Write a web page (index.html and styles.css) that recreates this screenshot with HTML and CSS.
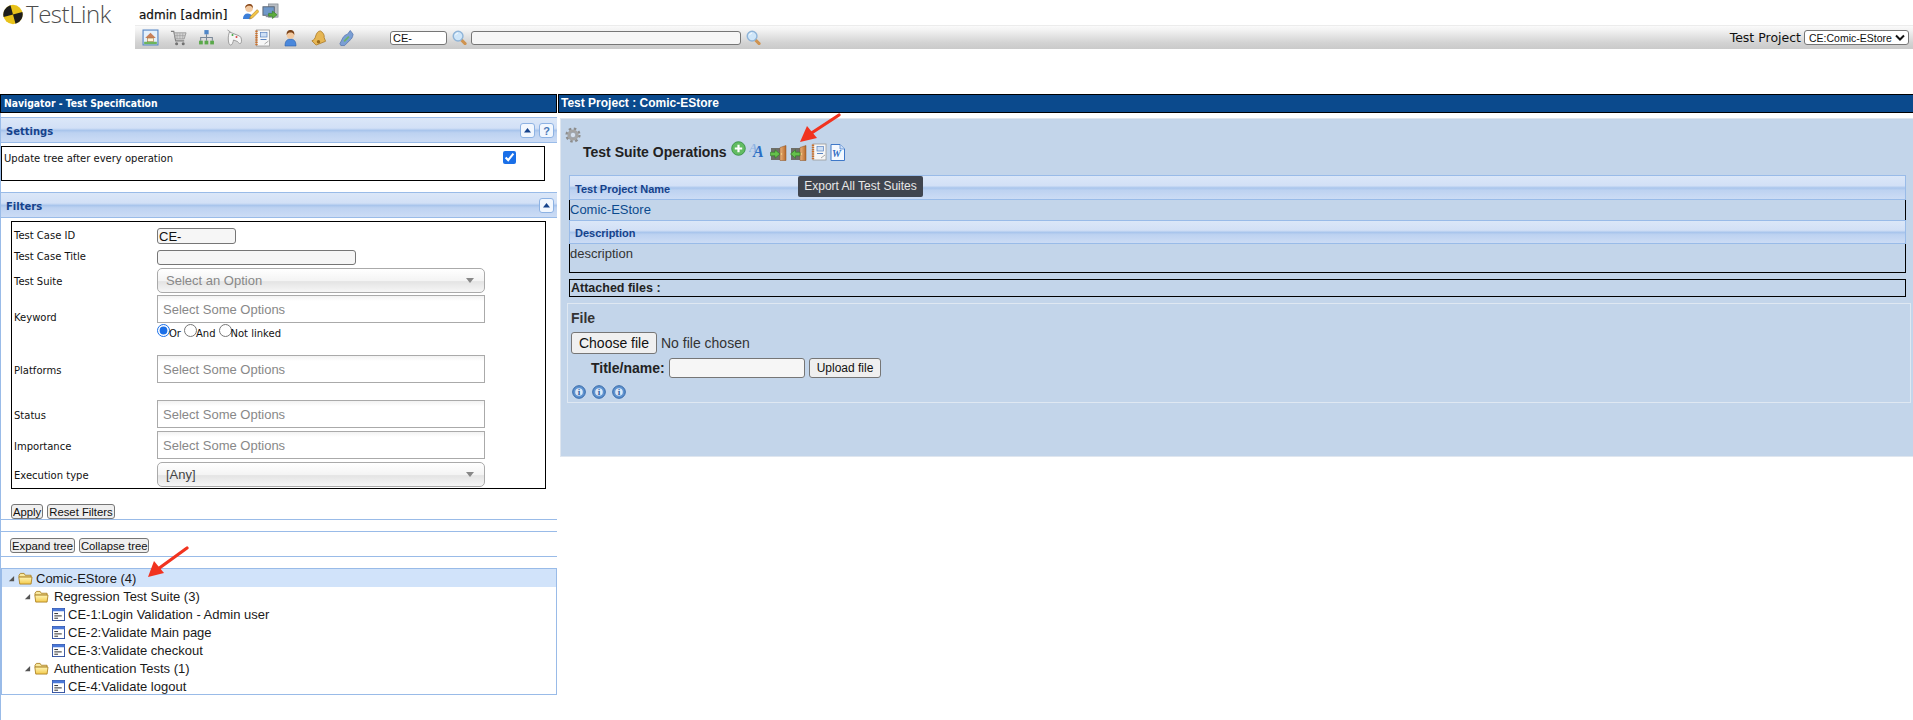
FILE: index.html
```html
<!DOCTYPE html>
<html lang="en">
<head>
<meta charset="utf-8">
<title>TestLink</title>
<link rel="stylesheet" href="styles.css">
</head>
<body>
<svg class="sprite" aria-hidden="true">
  <defs>
    <linearGradient id="gfolder" x1="0" y1="0" x2="0" y2="1"><stop offset="0" stop-color="#fff6b8"/><stop offset="1" stop-color="#f3c94a"/></linearGradient>
    <linearGradient id="gdoor" x1="0" y1="0" x2="1" y2="0"><stop offset="0" stop-color="#eab27c"/><stop offset="1" stop-color="#b86a2a"/></linearGradient>
    <symbol id="i-folder" viewBox="0 0 16 14"><path d="M1 3.500 2.500 1.500h4l1.200 2H14v2H1z" fill="#f8e9a0" stroke="#a87c1c" stroke-width=".9"/><path d="M.8 5.500h14.200L14 13H1.800z" fill="url(#gfolder)" stroke="#a87c1c" stroke-width=".9"/></symbol>
    <symbol id="i-case" viewBox="0 0 14 14"><rect x=".5" y=".5" width="13" height="13" fill="#fff" stroke="#2f4e9e"/><rect x=".5" y=".5" width="13" height="3" fill="#4a78d8"/><path d="M2.500 6h4M2.500 8.500h8M2.500 11h4" stroke="#222" stroke-width="1"/></symbol>
    <symbol id="i-tri" viewBox="0 0 8 8"><path d="M7 1v6H1z" fill="#555"/></symbol>
    <symbol id="i-mag" viewBox="0 0 16 16"><path d="M10 10.500 14 14.500" stroke="#cf9350" stroke-width="3.200" stroke-linecap="round"/><circle cx="6.500" cy="6.500" r="5.200" fill="#cfe6f9" stroke="#8fb4d8" stroke-width="1.500"/><path d="M3.800 5.500c.4-1.200 1.300-2 2.600-2.200" fill="none" stroke="#fff" stroke-width="1"/></symbol>
    <symbol id="i-home" viewBox="0 0 16 16"><rect x="1" y="1" width="14" height="14" fill="#e4f0fb" stroke="#5a8ac8" stroke-width="1.100"/><path d="M3 8.500 8 3.500 13 8.500z" fill="#c9805a"/><rect x="5" y="8.500" width="6" height="3.500" fill="#fff3d8" stroke="#9a6a30" stroke-width=".5"/><rect x="2" y="12" width="12" height="2.300" fill="#6cb45c"/></symbol>
    <symbol id="i-cart" viewBox="0 0 18 18"><path d="M1 2h3l2 10h9" fill="none" stroke="#808080" stroke-width="1.200"/><path d="M4.500 3.500H17l-2 6.500H5.800z" fill="#d2d2d2" stroke="#8f8f8f" stroke-width=".8"/><path d="M7.500 4v6M10.500 4v6M13.500 4v6M5 6.500h11" stroke="#989898" stroke-width=".6"/><circle cx="7" cy="15" r="1.600" fill="#707070"/><circle cx="14" cy="15" r="1.600" fill="#707070"/></symbol>
    <symbol id="i-tree" viewBox="0 0 16 16"><rect x="6" y="1" width="4" height="4" fill="#4f86c8"/><path d="M8 5v3M2.500 11V8h11v3M8 8v3" fill="none" stroke="#7a8898"/><rect x="1" y="11" width="3.500" height="3.500" fill="#5aa84a"/><rect x="6.200" y="11" width="3.500" height="3.500" fill="#5aa84a"/><rect x="11.500" y="11" width="3.500" height="3.500" fill="#5aa84a"/></symbol>
    <symbol id="i-pad" viewBox="0 0 16 18"><path d="M3 3 13 7c2 1 2.500 5 1.500 7-1 1.500-2.500 0-3.500-1.500L7 11c-.5 2-1 5-3 5-2.500 0-3-9-1-13z" fill="#f6f6f6" stroke="#8a8a8a" stroke-width=".8"/><circle cx="10" cy="8" r="1" fill="#d44"/><circle cx="6" cy="6" r="1" fill="#4a4"/><path d="M1 1 4 3" stroke="#8a8a8a" stroke-width=".8"/></symbol>
    <symbol id="i-note" viewBox="0 0 16 18"><rect x="2" y="1" width="13" height="16" fill="#f7f7f7" stroke="#9a9a9a" stroke-width=".8"/><path d="M2 1.500v15" stroke="#c9702c" stroke-width="2.400" stroke-dasharray="1.500 .7"/><rect x="6" y="3.500" width="6.500" height="4.500" fill="#cfe0f5" stroke="#5a84c0" stroke-width=".7"/><path d="M6 10.500h6" stroke="#5a84c0"/><path d="m10 15 4-3" stroke="#aaa"/></symbol>
    <symbol id="i-user" viewBox="0 0 16 18"><path d="M2.500 17c0-5 2-7 5.500-7s5.500 2 5.500 7z" fill="#4a88dc" stroke="#2c5ea8" stroke-width=".6"/><circle cx="8" cy="6" r="3.800" fill="#f2c9a0"/><path d="M4.200 6c-.5-4 2-5 3.800-5s4.300 1 3.800 5c-1-2-2-2.500-3.800-2.500S5.200 4 4.200 6z" fill="#7a4218"/></symbol>
    <symbol id="i-bell" viewBox="0 0 18 18"><path d="M11 1.500c3 1.500 4.500 4.500 4 7l1.500 4-10 4-4.500-4.500c2-.5 3.500-2.500 4-5 .8-3 2.500-5.500 5-5.500z" fill="#e6b654" stroke="#a8741c" stroke-width=".8"/><circle cx="9" cy="13" r="1.800" fill="#9a6a18"/></symbol>
    <symbol id="i-plug" viewBox="0 0 18 18"><path d="M13 1 16 5c-.5 4-2 5-3 6L7 17H3l-1-2 3-6c1-2 3-3.500 5-4z" fill="#7a9ed4" stroke="#4a6ea8" stroke-width=".7"/><path d="m6.500 12.500 5-5" stroke="#6cb468" stroke-width="1.800"/></symbol>
    <symbol id="i-editor" viewBox="0 0 18 18"><path d="M1 17c0-4 2-6 5-6 2 0 4 1 5 3l-2 3z" fill="#3d7fd8"/><circle cx="7.500" cy="5.500" r="4" fill="#f2c9a0"/><path d="M3.500 5.500C3 2 6 1 8 1s4 1.500 3.500 4.500C10.500 3.500 9 3 7.500 3s-3 .5-4 2.500z" fill="#8a4a1c"/><path d="M8 17l1-3 7-7 2 2-7 7z" fill="#f3c545" stroke="#a8741c" stroke-width=".6"/></symbol>
    <symbol id="i-monitor" viewBox="0 0 18 18"><rect x="7" y="1" width="10" height="14" fill="#b9bec4" stroke="#7b828a" stroke-width=".7"/><rect x="1" y="4" width="12" height="9" fill="#6f98c9" stroke="#5a6470"/><rect x="4" y="13" width="6" height="2" fill="#8b929a"/><path d="M7 11h4V8.500l5 4-5 4V14H7z" fill="#5cad3c" stroke="#2f7a20" stroke-width=".6"/></symbol>
    <symbol id="i-up" viewBox="0 0 15 15"><rect x=".5" y=".5" width="14" height="14" rx="2.500" fill="#f2f7fe" stroke="#8db2e3"/><path d="M7.500 5 11 9.500H4z" fill="#15428b"/></symbol>
    <symbol id="i-help" viewBox="0 0 15 15"><rect x=".5" y=".5" width="14" height="14" rx="2.500" fill="#f2f7fe" stroke="#8db2e3"/><text x="7.500" y="11.500" text-anchor="middle" class="glyph-help">?</text></symbol>
    <symbol id="i-gear" viewBox="0 0 16 16"><circle cx="8" cy="8" r="6.400" fill="none" stroke="#8d8d8d" stroke-width="2.400" stroke-dasharray="2.500 2.530"/><circle cx="8" cy="8" r="4.300" fill="none" stroke="#a4a4a4" stroke-width="2.600"/><circle cx="8" cy="8" r="2.800" fill="#d5e0ee" stroke="#7d7d7d" stroke-width=".6"/></symbol>
    <symbol id="i-plus" viewBox="0 0 15 15"><circle cx="7.500" cy="7.500" r="6.800" fill="#62bc62" stroke="#2f8a3a" stroke-width=".8"/><path d="M7.500 3.800v7.400M3.800 7.500h7.400" stroke="#fff" stroke-width="2.200"/></symbol>
    <symbol id="i-door-out" viewBox="0 0 17 16"><rect x="1" y="3" width="9" height="12" fill="#6e6e68"/><path d="M10 2.500 16 .5V15.500H10z" fill="url(#gdoor)" stroke="#8b5020" stroke-width=".5"/><circle cx="11.500" cy="9" r=".7" fill="#ffe08a"/><path d="M.5 7.200H5V4.800L10 9l-5 4.200V10.800H.5z" fill="#64c04a" stroke="#2c7a22" stroke-width=".6"/></symbol>
    <symbol id="i-door-in" viewBox="0 0 17 16"><rect x="1" y="3" width="9" height="12" fill="#6e6e68"/><path d="M10 2.500 16 .5V15.500H10z" fill="url(#gdoor)" stroke="#8b5020" stroke-width=".5"/><circle cx="11.500" cy="9" r=".7" fill="#ffe08a"/><path d="M10 7.200H5.500V4.800L.5 9l5 4.200V10.800H10z" fill="#64c04a" stroke="#2c7a22" stroke-width=".6"/></symbol>
    <symbol id="i-word" viewBox="0 0 15 17"><path d="M1 .5h9l4.500 4.500v11.500H1z" fill="#f5f9ff" stroke="#3f78c8"/><path d="M10 .5V5h4.500" fill="#cfe0f8" stroke="#3f78c8" stroke-width=".7"/><text x="6.500" y="13" text-anchor="middle" class="glyph-word">W</text></symbol>
    <symbol id="i-info" viewBox="0 0 14 14"><circle cx="7" cy="7" r="6.300" fill="#5f93cf" stroke="#3467a8"/><circle cx="7" cy="7" r="3.800" fill="#dbe8f8"/><text x="7" y="10.300" text-anchor="middle" class="glyph-info">i</text></symbol>
  </defs>
</svg>

<header class="top">
  <div class="brand">
    <svg class="logo-mark" viewBox="0 0 20 21"><circle cx="10" cy="10.500" r="9.700" fill="#e8c21a"/><path d="M10 10.500 .63 13.010A9.700 9.700 0 0 1 7.490 1.130zM10 10.500 19.370 7.990A9.700 9.700 0 0 1 12.510 19.870z" fill="#1d1d1d"/></svg>
    <span class="logo-text">TestLink</span>
  </div>
  <div class="top-main">
    <div class="userline">
      <span class="username">admin [admin]</span>
      <svg class="ic-16 user-ic"><use href="#i-editor"/></svg>
      <svg class="ic-16"><use href="#i-monitor"/></svg>
    </div>
    <div class="toolbar">
      <div class="tb-icons">
        <svg class="ic-16"><use href="#i-home"/></svg>
        <svg class="ic-18"><use href="#i-cart"/></svg>
        <svg class="ic-16"><use href="#i-tree"/></svg>
        <svg class="ic-18"><use href="#i-pad"/></svg>
        <svg class="ic-18"><use href="#i-note"/></svg>
        <svg class="ic-18"><use href="#i-user"/></svg>
        <svg class="ic-18"><use href="#i-bell"/></svg>
        <svg class="ic-18"><use href="#i-plug"/></svg>
      </div>
      <input class="in tb-id" value="CE-">
      <svg class="ic-15"><use href="#i-mag"/></svg>
      <input class="in tb-search">
      <svg class="ic-15"><use href="#i-mag"/></svg>
      <div class="tb-project">
        <span class="tb-label">Test Project</span>
        <div class="tb-select"><span>CE:Comic-EStore</span><svg class="chev" viewBox="0 0 10 7"><path d="M1 1.500 5 5.500 9 1.500" fill="none" stroke="#111" stroke-width="2"/></svg></div>
      </div>
    </div>
  </div>
</header>

<main class="workspace">
  <section class="nav">
    <h1 class="bar bar-nav">Navigator - Test Specification</h1>

    <div class="xhead xhead-settings">
      <span class="xtitle">Settings</span>
      <svg class="ic-15"><use href="#i-up"/></svg>
      <svg class="ic-15"><use href="#i-help"/></svg>
    </div>
    <div class="settings-body">
      <div class="settings-box">
        <span>Update tree after every operation</span>
        <input type="checkbox" class="chk" checked>
      </div>
    </div>

    <div class="xhead">
      <span class="xtitle">Filters</span>
      <svg class="ic-15"><use href="#i-up"/></svg>
    </div>
    <div class="filters">
      <div class="frow fr-id"><span class="flabel up">Test Case ID</span><input class="in f-id" value="CE-"></div>
      <div class="frow fr-title"><span class="flabel up">Test Case Title</span><input class="in f-title"></div>
      <div class="frow fr-3"><span class="flabel">Test Suite</span><div class="chosen muted"><span>Select an Option</span><i class="caret"></i></div></div>
      <div class="frow fr-2">
        <span class="flabel">Keyword</span>
        <div class="fstack">
          <div class="multi">Select Some Options</div>
          <div class="radios">
            <label><input type="radio" name="k" checked>Or</label>
            <label><input type="radio" name="k">And</label>
            <label><input type="radio" name="k">Not linked</label>
          </div>
        </div>
      </div>
      <div class="frow fr-17"><span class="flabel">Platforms</span><div class="multi">Select Some Options</div></div>
      <div class="frow fr-17"><span class="flabel">Status</span><div class="multi">Select Some Options</div></div>
      <div class="frow fr-3"><span class="flabel">Importance</span><div class="multi">Select Some Options</div></div>
      <div class="frow fr-3"><span class="flabel">Execution type</span><div class="chosen"><span>[Any]</span><i class="caret"></i></div></div>
    </div>
    <div class="btnrow btnrow-filter">
      <button class="btn">Apply</button>
      <button class="btn">Reset Filters</button>
    </div>

    <div class="btnrow btnrow-tree">
      <button class="btn">Expand tree</button>
      <button class="btn">Collapse tree</button>
    </div>

    <ul class="tree">
      <li class="tnode sel"><svg class="tri"><use href="#i-tri"/></svg><svg class="folder"><use href="#i-folder"/></svg><span>Comic-EStore (4)</span></li>
      <li class="tnode l1"><svg class="tri"><use href="#i-tri"/></svg><svg class="folder"><use href="#i-folder"/></svg><span class="tgap">Regression Test Suite (3)</span></li>
      <li class="tnode l2"><svg class="case"><use href="#i-case"/></svg><span>CE-1:Login Validation - Admin user</span></li>
      <li class="tnode l2"><svg class="case"><use href="#i-case"/></svg><span>CE-2:Validate Main page</span></li>
      <li class="tnode l2"><svg class="case"><use href="#i-case"/></svg><span>CE-3:Validate checkout</span></li>
      <li class="tnode l1"><svg class="tri"><use href="#i-tri"/></svg><svg class="folder"><use href="#i-folder"/></svg><span class="tgap">Authentication Tests (1)</span></li>
      <li class="tnode l2"><svg class="case"><use href="#i-case"/></svg><span>CE-4:Validate logout</span></li>
    </ul>
  </section>

  <section class="content">
    <h1 class="bar bar-content">Test Project : Comic-EStore</h1>
    <div class="panel">
      <svg class="gear"><use href="#i-gear"/></svg>
      <div class="ops">
        <h2 class="ops-title">Test Suite Operations</h2>
        <svg class="ic-15 op-plus"><use href="#i-plus"/></svg>
        <svg class="op-aa" viewBox="0 0 18 22"><text x="0" y="13" class="glyph-a1">A<tspan dx="-4.700" dy="5" class="glyph-a2">A</tspan></text></svg>
        <svg class="op-door"><use href="#i-door-out"/></svg>
        <svg class="op-door"><use href="#i-door-in"/></svg>
        <svg class="op-note"><use href="#i-note"/></svg>
        <svg class="op-word"><use href="#i-word"/></svg>
      </div>
      <div class="tooltip">Export All Test Suites</div>

      <div class="xhead xhead-r"><span class="xtitle">Test Project Name</span></div>
      <div class="val val-name"><a class="link">Comic-EStore</a></div>
      <div class="xhead xhead-r xhead-d"><span class="xtitle">Description</span></div>
      <div class="val val-desc">description</div>
      <div class="attached">Attached files :</div>

      <div class="upload">
        <div class="up-title">File</div>
        <div class="up-file"><button class="btn-file">Choose file</button><span>No file chosen</span></div>
        <div class="up-name">
          <label class="up-label">Title/name:</label>
          <input class="in up-input">
          <button class="btn up-btn">Upload file</button>
        </div>
        <div class="up-info">
          <svg class="ic-14"><use href="#i-info"/></svg>
          <svg class="ic-14"><use href="#i-info"/></svg>
          <svg class="ic-14"><use href="#i-info"/></svg>
        </div>
      </div>
    </div>
  </section>
</main>

<svg class="arrow arrow-top" viewBox="0 0 44 32"><path d="M41 2 12 21" stroke="#f1331f" stroke-width="3.200" stroke-linecap="round"/><path d="M2 29 9 13 19 25z" fill="#f1331f"/></svg>
<svg class="arrow arrow-tree" viewBox="0 0 44 34"><path d="M41 2 12 23" stroke="#f1331f" stroke-width="3.200" stroke-linecap="round"/><path d="M2 31 8 15 18 27z" fill="#f1331f"/></svg>
</body>
</html>
```
FILE: styles.css
```css
* { box-sizing: border-box; }
html, body { margin: 0; padding: 0; }
body {
  position: relative;
  width: 1913px;
  height: 720px;
  overflow: hidden;
  background: #fff;
  font-family: "Liberation Sans", Arial, sans-serif;
  font-size: 13px;
  color: #111;
}
h1, h2, ul { margin: 0; padding: 0; }
svg { display: block; flex: none; }
.sprite { position: absolute; width: 0; height: 0; }

.ic-14 { width: 14px; height: 14px; }
.ic-15 { width: 15px; height: 15px; }
.ic-16 { width: 17px; height: 17px; }
.ic-18 { width: 17px; height: 18px; }

.glyph-help { font: bold 11px "Liberation Sans", sans-serif; fill: #4a78b8; }
.glyph-word { font: italic bold 10px "Liberation Serif", serif; fill: #2f6cc4; }
.glyph-info { font: bold 9px "Liberation Serif", serif; fill: #2f5f9e; }
.glyph-a1 { font: italic bold 13px "Liberation Serif", serif; fill: #8fb3e2; }
.glyph-a2 { font: italic bold 16px "Liberation Serif", serif; fill: #2b6fc4; }

/* top */
.top { display: flex; height: 94px; }
.brand { display: flex; width: 135px; height: 30px; padding: 4px 0 0 3px; gap: 3px; }
.logo-mark { width: 20px; height: 21px; }
.logo-text {
  font-family: "Open Sans", sans-serif;
  font-weight: 300;
  font-size: 24px;
  line-height: 20px;
  color: #4c4c4c;
  letter-spacing: -.45px;
}
.top-main { flex: 1; min-width: 0; }
.userline { display: flex; align-items: flex-start; height: 25px; padding: 3px 0 0 4px; }
.username {
  font-family: "DejaVu Sans", sans-serif;
  font-size: 12px;
  -webkit-text-stroke: .25px #111;
  line-height: 24px;
  width: 103px;
}
.user-ic { margin-right: 3px; }
.toolbar {
  display: flex;
  align-items: center;
  height: 24px;
  border-top: 1px solid #ececec;
  background: linear-gradient(#fafafa 0, #f4f4f4 15%, #d2d2d2 75%, #cacaca 100%);
}
.tb-icons { display: flex; align-items: center; gap: 11px; width: 255px; padding-left: 7px; }
.in {
  border: 1px solid #767676;
  border-radius: 3px;
  background: #f6f6f6;
  padding: 0 1px;
  font: 13px "Liberation Sans", sans-serif;
  color: #111;
  outline: none;
}
.tb-id { width: 57px; height: 14px; margin-right: 5px; background: #fff; font-size: 11px; padding: 0 2px; }
.tb-search { width: 270px; height: 14px; margin: 0 5px 0 4px; }
.tb-project { margin-left: auto; display: flex; align-items: center; padding-right: 4px; }
.tb-label { font: 12.500px "DejaVu Sans", sans-serif; margin-right: 3px; }
.tb-select {
  display: flex;
  align-items: center;
  justify-content: space-between;
  width: 105px;
  height: 15px;
  padding: 0 3px 0 4px;
  border: 1px solid #767676;
  border-radius: 3px;
  background: #fff;
  font-size: 10.500px;
  white-space: nowrap;
}
.chev { width: 10px; height: 7px; }

/* workspace */
.workspace { display: flex; height: 626px; }
.nav { width: 557px; border-left: 1px solid #99bbe8; height: 100%; }
.content { flex: 1; min-width: 0; margin-left: 1px; }
.bar {
  height: 19px;
  background: #0b4a8d;
  border: 1px solid #000;
  color: #fff;
  font-weight: 700;
  line-height: 17px;
}
.bar-nav {
  margin-left: -1px;
  font-family: "DejaVu Sans Condensed", "DejaVu Sans", sans-serif;
  font-size: 10.300px;
  padding-left: 3px;
}
.bar-content {
  border-width: 1px 0 1px 1px;
  font-size: 12px;
  padding-left: 2px;
}

.xhead {
  display: flex;
  align-items: center;
  gap: 4px;
  height: 26px;
  padding: 0 3px 0 5px;
  border: solid #99bbe8;
  border-width: 1px 0;
  background: linear-gradient(#dbe7f8 0, #d2e0f6 42%, #a9c5ec 52%, #bdd2f1 62%, #ccdcf5 100%);
}
.xhead-settings { margin-top: 4px; }
.xtitle {
  margin-right: auto;
  margin-top: 3px;
  font: bold 10px "DejaVu Sans", sans-serif;
  color: #15428b;
}
.settings-body { height: 49px; padding-top: 3px; }
.settings-box {
  position: relative;
  display: flex;
  align-items: flex-start;
  justify-content: space-between;
  width: 544px;
  height: 35px;
  padding: 4px 28px 0 2px;
  border: 1px solid #000;
  font: 10px "DejaVu Sans", sans-serif;
}
.settings-box span { margin-top: 2px; }
.chk { width: 13px; height: 13px; margin: 0; accent-color: #1a6fe8; }

.filters {
  width: 535px;
  height: 268px;
  margin: 3px 0 0 10px;
  padding: 6px 0 0 2px;
  border: 1px solid #000;
}
.frow { display: flex; align-items: center; font: 10px "DejaVu Sans", sans-serif; }
.flabel { width: 143px; flex: none; padding-top: 2px; }
.flabel.up { padding: 0 0 2px; }
.fr-title { margin-top: 6px; }
.fr-2 { margin-top: 2px; }
.fr-3 { margin-top: 3px; }
.fr-17 { margin-top: 17px; }
.f-id { width: 79px; height: 16px; }
.f-title { width: 199px; height: 15px; }
.chosen {
  display: flex;
  align-items: center;
  justify-content: space-between;
  width: 328px;
  height: 25px;
  padding: 0 10px 0 8px;
  border: 1px solid #aaa;
  border-radius: 5px;
  background: linear-gradient(#fff 0, #f4f4f4 50%, #e4e4e4 55%, #f6f6f6 100%);
  font: 13px "Liberation Sans", sans-serif;
  color: #444;
}
.chosen.muted { color: #888; }
.caret { width: 0; height: 0; border: 4px solid transparent; border-top: 5px solid #888; border-bottom: 0; }
.multi {
  width: 328px;
  height: 28px;
  padding: 0 5px;
  border: 1px solid #aaa;
  background: linear-gradient(#f2f2f2 0, #fff 20%);
  font: 13px/27px "Liberation Sans", sans-serif;
  color: #888;
}
.fstack { display: flex; flex-direction: column; }
.radios { display: flex; height: 13px; margin-top: 2px; gap: 3px; }
.radios label { display: flex; align-items: center; height: 13px; padding-top: 3px; }
.radios input { width: 13px; height: 13px; margin: -6px -1px 0 0; accent-color: #1a6fe8; }

.btn {
  padding: 1px 1px 0;
  height: 15px;
  border: 1px solid #767676;
  border-radius: 3px;
  background: #efefef;
  font: 11.300px/13px "Liberation Sans", sans-serif;
  color: #111;
}
.btnrow { display: flex; gap: 4px; border-bottom: 1px solid #99bbe8; align-items: flex-start; }
.btnrow-filter { height: 31px; padding: 15px 0 0 10px; }
.btnrow-tree { height: 26px; margin-top: 11px; padding: 6px 0 0 9px; border-top: 1px solid #99bbe8; }

.tree {
  list-style: none;
  width: 556px;
  height: 127px;
  margin-top: 11px;
  border: 1px solid #99bbe8;
}
.tnode { display: flex; align-items: center; height: 18px; padding-left: 6px; font-size: 13px; color: #1a1a1a; }
.tnode.sel { background: #d1e3fa; }
.tnode.l1 { padding-left: 22px; }
.tnode.l2 { padding-left: 50px; }
.tri { width: 7px; height: 7px; margin-right: 3px; }
.folder { width: 15px; height: 13px; margin-right: 3px; }
.tgap { margin-left: 2px; }
.case { width: 13px; height: 13px; margin-right: 3px; }

/* right panel */
.panel {
  position: relative;
  height: 339px;
  margin: 5px 0 0 2px;
  padding: 8px 7px 0 8px;
  background: #c3d5ea;
  border: 1px solid #dfe6ef;
  border-width: 1px 0 1px 1px;
}
.gear { width: 16px; height: 16px; margin-left: -4px; }
.ops { display: flex; align-items: flex-end; height: 20px; margin: -2px 0 14px 14px; }
.ops-title { font-size: 14px; font-weight: 700; color: #222; line-height: 18px; width: 148px; padding-top: 1px; }
.op-plus { margin-bottom: 5px; }
.op-aa { width: 18px; height: 22px; margin: 0 3px; }
.op-door { width: 17px; height: 16px; margin-right: 3px; }
.op-note { width: 16px; height: 18px; margin: 0 3px 0 1px; }
.op-word { width: 15px; height: 17px; }
.tooltip {
  position: absolute;
  left: 237px;
  top: 57px;
  width: 125px;
  height: 21px;
  border-radius: 2px;
  background: #40454f;
  color: #e8e8e8;
  font-size: 12px;
  line-height: 21px;
  text-align: center;
}
.xhead-r { height: 25px; border-width: 1px; padding-left: 5px; }
.xhead-d { height: 24px; }
.xhead-r .xtitle { font: bold 11px "Liberation Sans", sans-serif; margin-top: 2px; }
.val { border: solid #000; border-width: 0 1px; color: #333; }
.val-name { height: 20px; line-height: 20px; }
.link { color: #0b4a8d; }
.val-desc { height: 29px; border-bottom-width: 1px; line-height: 20px; }
.attached {
  height: 18px;
  margin-top: 6px;
  padding-left: 1px;
  border: 1px solid #000;
  font-weight: 700;
  font-size: 12.500px;
  line-height: 16px;
  color: #222;
}
.upload {
  height: 100px;
  margin: 6px -5px 0 -2px;
  padding: 4px 3px 0;
  border: 1px solid #dfe8f2;
  font-size: 14px;
  color: #333;
}
.up-title { font-weight: 700; line-height: 20px; height: 24px; }
.up-file { display: flex; align-items: center; gap: 4px; height: 22px; }
.btn-file {
  width: 86px;
  height: 22px;
  padding: 0;
  border: 1px solid #767676;
  border-radius: 3px;
  background: #f0f0f0;
  font: 14px "Liberation Sans", sans-serif;
  color: #111;
}
.up-name { display: flex; align-items: center; height: 20px; margin: 4px 0 0 20px; }
.up-label { font-weight: 700; width: 78px; color: #222; }
.up-input { width: 136px; height: 20px; }
.up-btn { height: 20px; width: 72px; margin-left: 4px; font-size: 12px; padding: 0; }
.up-info { display: flex; gap: 6px; margin-top: 7px; padding-left: 1px; }

/* annotations */
.arrow { position: absolute; }
.arrow-top { left: 798px; top: 113px; width: 44px; height: 32px; }
.arrow-tree { left: 146px; top: 546px; width: 44px; height: 34px; }
```
